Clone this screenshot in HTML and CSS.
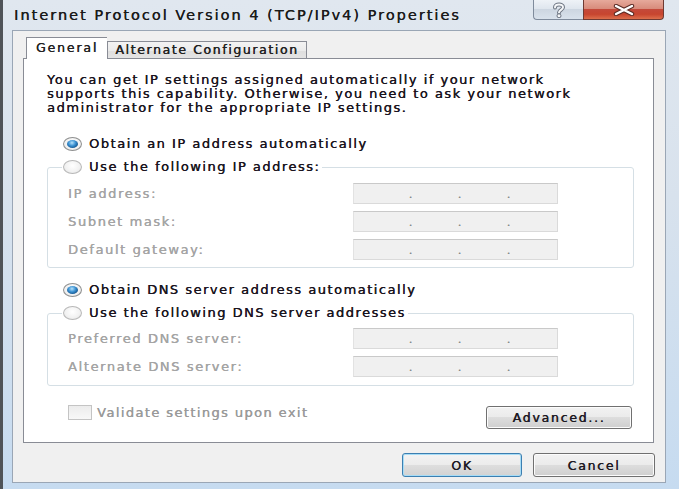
FILE: index.html
```html
<!DOCTYPE html>
<html lang="en">
<head>
<meta charset="utf-8">
<title>Internet Protocol Version 4 (TCP/IPv4) Properties</title>
<link rel="stylesheet" href="styles.css">
</head>
<body>
<div class="window">
  <div class="titlebar">
    <div class="title">Internet Protocol Version 4 (TCP/IPv4) Properties</div>
    <div class="caption">
      <div class="cap-btn help">
        <svg width="14" height="16" viewBox="0 0 14 16">
          <path d="M3 5.5 C3 1.5 11 1.5 11 5.2 C11 7.8 7 7.8 7 10.5" fill="none" stroke="#6b7380" stroke-width="4" stroke-linecap="round"/>
          <path d="M3 5.5 C3 1.5 11 1.5 11 5.2 C11 7.8 7 7.8 7 10.5" fill="none" stroke="#f4f6f8" stroke-width="2" stroke-linecap="round"/>
          <circle cx="7" cy="13.8" r="2" fill="#f4f6f8" stroke="#6b7380" stroke-width="1"/>
        </svg>
      </div>
      <div class="cap-btn close">
        <svg width="24" height="12" viewBox="0 0 24 12">
          <path d="M4 2 L20 10 M20 2 L4 10" stroke="#5a2a24" stroke-width="4.4" stroke-linecap="round"/>
          <path d="M4 2 L20 10 M20 2 L4 10" stroke="#ffffff" stroke-width="2.4" stroke-linecap="round"/>
        </svg>
      </div>
    </div>
  </div>
  <div class="client">
    <div class="tabs">
      <div class="tab active">General</div>
      <div class="tab">Alternate Configuration</div>
    </div>
    <div class="panel">
      <p class="desc">You can get IP settings assigned automatically if your network<br>supports this capability. Otherwise, you need to ask your network<br>administrator for the appropriate IP settings.</p>

      <div class="radio-row first">
        <span class="radio on"><span class="dot"></span></span>
        <span class="rlabel">Obtain an IP address automatically</span>
      </div>

      <fieldset class="group g1">
        <legend class="radio-row">
          <span class="radio"></span>
          <span class="rlabel">Use the following IP address:</span>
        </legend>
        <div class="field"><span class="lbl">IP address:</span><span class="ipbox"><span>.</span><span>.</span><span>.</span></span></div>
        <div class="field"><span class="lbl">Subnet mask:</span><span class="ipbox"><span>.</span><span>.</span><span>.</span></span></div>
        <div class="field"><span class="lbl">Default gateway:</span><span class="ipbox"><span>.</span><span>.</span><span>.</span></span></div>
      </fieldset>

      <div class="radio-row second">
        <span class="radio on"><span class="dot"></span></span>
        <span class="rlabel">Obtain DNS server address automatically</span>
      </div>

      <fieldset class="group g2">
        <legend class="radio-row">
          <span class="radio"></span>
          <span class="rlabel">Use the following DNS server addresses</span>
        </legend>
        <div class="field"><span class="lbl">Preferred DNS server:</span><span class="ipbox"><span>.</span><span>.</span><span>.</span></span></div>
        <div class="field"><span class="lbl">Alternate DNS server:</span><span class="ipbox"><span>.</span><span>.</span><span>.</span></span></div>
      </fieldset>

      <div class="bottom-row">
        <div class="check"><span class="box"></span><span class="clabel">Validate settings upon exit</span></div>
        <button class="btn adv">Advanced...</button>
      </div>
    </div>
    <div class="actions">
      <button class="btn ok">OK</button>
      <button class="btn cancel">Cancel</button>
    </div>
  </div>
</div>
</body>
</html>
```
FILE: styles.css
```css
html, body {
  margin: 0;
  padding: 0;
}
body {
  width: 679px;
  height: 489px;
  overflow: hidden;
  font-family: "DejaVu Sans", "Liberation Sans", sans-serif;
  font-size: 13px;
  letter-spacing: 1.5px;
  color: #1a1420;
  text-shadow: 0.35px 0 0 currentColor;
}
.window {
  box-sizing: border-box;
  width: 679px;
  height: 489px;
  display: flex;
  flex-direction: column;
  border-left: 3px solid #4f5358;
  padding: 0 13px 6px 9px;
  background: linear-gradient(#e0e7ef 0%, #d8e2ed 40%, #c6dbf0 100%);
}
.titlebar {
  height: 30px;
  flex: none;
  display: flex;
  align-items: flex-start;
  justify-content: space-between;
}
.title {
  margin-left: 2px;
  line-height: 30px;
  font-size: 14.5px;
  letter-spacing: 2px;
  color: #1b1b1b;
}
.caption {
  display: flex;
  margin-right: 2px;
}
.cap-btn {
  box-sizing: border-box;
  height: 20px;
  display: flex;
  align-items: center;
  justify-content: center;
  border: 1px solid #7f8b9c;
  border-top: none;
}
.help {
  width: 50px;
  border-radius: 0 0 0 4px;
  border-right: none;
  background: linear-gradient(#eef2f7 0%, #dfe6ee 45%, #cdd6e1 50%, #d9e2ec 100%);
}
.close {
  width: 81px;
  border-color: #6e3a33;
  border-radius: 0 0 4px 0;
  background: linear-gradient(#e6a99b 0%, #d88c7c 45%, #c4493a 50%, #c7452f 75%, #dd6f4c 100%);
}
.client {
  flex: 1;
  box-sizing: border-box;
  display: flex;
  flex-direction: column;
  background: #f0f0f0;
  border: 1px solid #9aa6b5;
  padding: 6px 10px 5px 10px;
}
.tabs {
  display: flex;
  align-items: flex-end;
  margin-left: 3px;
  margin-bottom: -1px;
  height: 22px;
}
.tab {
  box-sizing: border-box;
  height: 18px;
  line-height: 16px;
  border: 1px solid #898c95;
  border-bottom: none;
  font-size: 12.5px;
  letter-spacing: 1.6px;
  background: linear-gradient(#f3f3f3 0%, #ebebeb 50%, #dedede 51%, #e5e5e5 100%);
  color: #222;
  text-align: center;
  padding: 0;
}
.tab.active {
  height: 22px;
  line-height: 20px;
  width: 81px;
  background: #ffffff;
  position: relative;
  z-index: 1;
  border-right: none;
  letter-spacing: 1.85px;
}
.tab.active + .tab {
  width: 200px;
}
.panel {
  box-sizing: border-box;
  height: 385px;
  flex: none;
  background: #ffffff;
  border: 1px solid #898c95;
  padding: 14px 0 12px 23px;
  display: flex;
  flex-direction: column;
  margin-right: 1px;
}
.desc {
  margin: 0;
  line-height: 14px;
  white-space: nowrap;
}
.radio-row {
  display: flex;
  align-items: center;
  height: 16px;
  line-height: 16px;
}
.radio-row.first {
  margin: 21px 0 0 16px;
}
.radio-row.second {
  margin: 14px 0 0 16px;
}
.radio {
  box-sizing: border-box;
  width: 19px;
  height: 14px;
  border-radius: 50%;
  border: 1px solid #b8b8b8;
  background: radial-gradient(ellipse at 50% 40%, #ffffff 0%, #f1f1f1 60%, #dcdcdc 100%);
  display: flex;
  align-items: center;
  justify-content: center;
  margin-right: 7px;
  flex: none;
}
.radio.on {
  border-color: #8e8f8f;
}
.dot {
  width: 11px;
  height: 8px;
  border-radius: 50%;
  background: radial-gradient(ellipse at 45% 35%, #b6e2fb 0%, #3d93d3 40%, #13558f 75%, #0d3a66 100%);
}
.group {
  margin: 7px 19px 0 0;
  border: 1px solid #d5dfe5;
  border-radius: 3px;
  padding: 8px 0 7px 14px;
  min-width: 0;
}
.g2 {
  padding: 7px 0 8px 14px;
}
.group legend {
  padding: 0 2px 0 1px;
  background: #ffffff;
}
.field {
  display: flex;
  align-items: center;
  height: 21px;
  margin-left: 6px;
}
.field + .field {
  margin-top: 7px;
}
.lbl {
  width: 285px;
  color: #a4a4a4;
  flex: none;
  letter-spacing: 1.6px;
}
.ipbox {
  box-sizing: border-box;
  width: 205px;
  height: 21px;
  background: #f0f0f0;
  border: 1px solid #dadada;
  border-top-color: #c9c9c9;
  border-left-color: #e2e2e2;
  display: flex;
  align-items: center;
  padding-left: 54px;
  gap: 44px;
  color: #8a8a8a;
  font-size: 11px;
  line-height: 11px;
  letter-spacing: 0;
}
.ipbox span {
  width: 5px;
  text-align: center;
  margin-top: 1px;
}
.bottom-row {
  display: flex;
  justify-content: space-between;
  align-items: flex-start;
  margin: 18px 21px 0 0;
  height: 25px;
}
.check {
  display: flex;
  align-items: center;
  margin: 1px 0 0 21px;
  height: 15px;
}
.box {
  box-sizing: border-box;
  width: 24px;
  height: 15px;
  border: 1px solid #c4c4c4;
  background: linear-gradient(#ececec, #f8f8f8);
  margin-right: 5px;
}
.clabel {
  color: #9a9a9a;
  letter-spacing: 1.4px;
}
.btn {
  box-sizing: border-box;
  font-family: inherit;
  font-size: 12.5px;
  letter-spacing: 1.75px;
  color: #1d1a24;
  text-shadow: 0.35px 0 0 currentColor;
  border: 1px solid #707070;
  border-radius: 3px;
  background: linear-gradient(#f2f2f2 0%, #ebebeb 48%, #dddddd 50%, #cfcfcf 100%);
  box-shadow: inset 0 0 0 1px #fcfcfc;
  padding: 0;
}
.adv {
  width: 146px;
  height: 23px;
  margin-top: 2px;
}
.actions {
  display: flex;
  justify-content: flex-end;
  gap: 11px;
  margin-top: 10px;
}
.ok, .cancel {
  height: 24px;
}
.ok {
  width: 120px;
  border-color: #3c7fb1;
  box-shadow: inset 0 0 0 1px #a6dcf6;
  background: linear-gradient(#f3f3f3 0%, #ececec 48%, #dedede 50%, #d2d2d2 100%);
}
.cancel {
  width: 122px;
}
```
